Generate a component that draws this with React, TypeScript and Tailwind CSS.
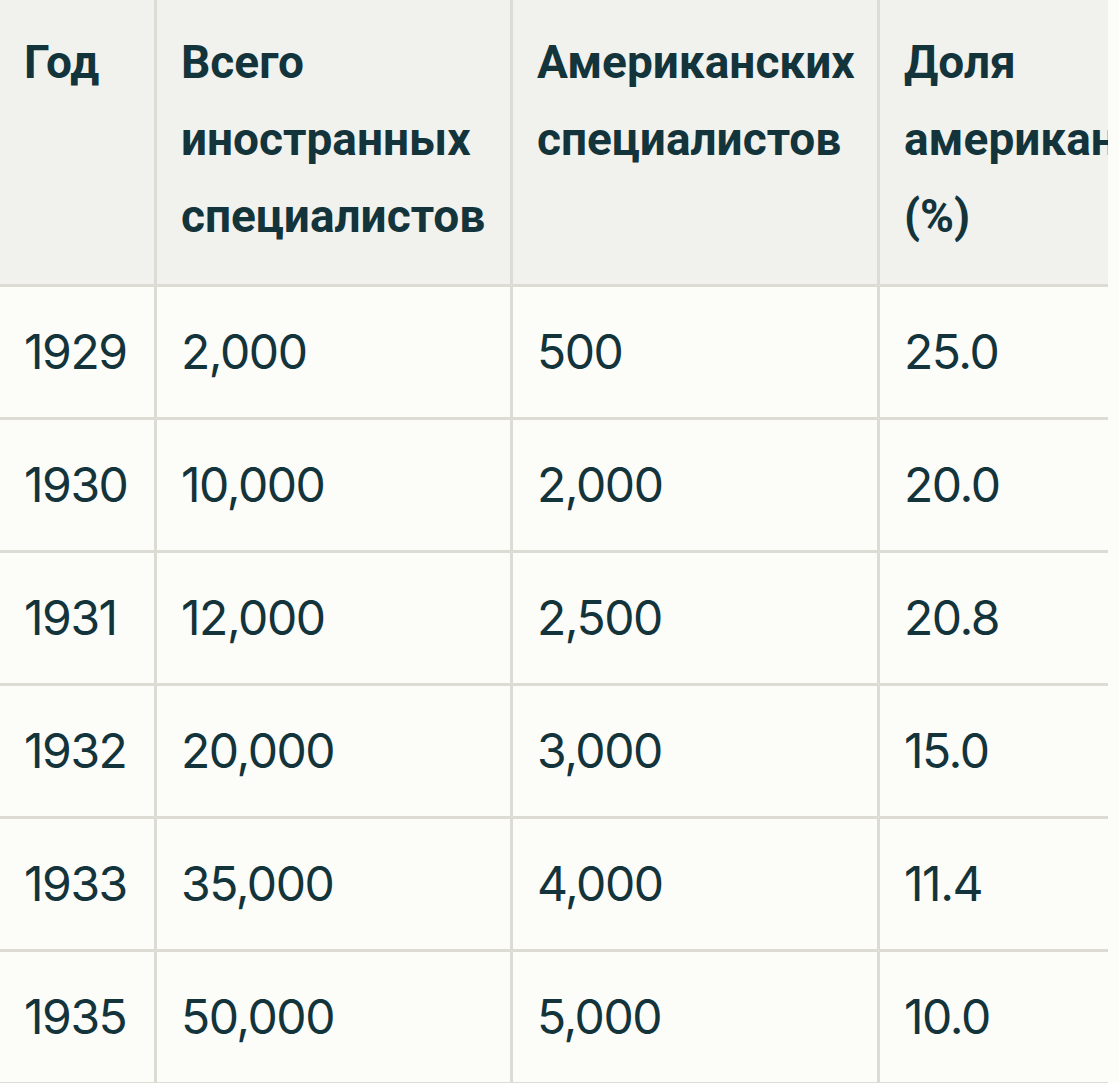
import { JSX } from 'react'

type Row = {
	year: string
	total: string
	american: string
	share: string
}

const rows: Row[] = [
	{ year: '1929', total: '2,000', american: '500', share: '25.0' },
	{ year: '1930', total: '10,000', american: '2,000', share: '20.0' },
	{ year: '1931', total: '12,000', american: '2,500', share: '20.8' },
	{ year: '1932', total: '20,000', american: '3,000', share: '15.0' },
	{ year: '1933', total: '35,000', american: '4,000', share: '11.4' },
	{ year: '1935', total: '50,000', american: '5,000', share: '10.0' },
]

export default function App(): JSX.Element {
	const th = 'h-[287px] align-top pt-[24px] px-6 text-left font-bold text-[46px] leading-[77px] border-b-[3px] border-[#dcdbd4] bg-[#f1f1ed]'
	const td = 'h-[133px] align-middle px-6 text-[48px] leading-[56px] tracking-[-0.03em] border-b-[3px] border-[#dcdbd4]'

	return (
		<div className="min-h-screen bg-[#fcfcf9] text-[#13343b]">
			<div className="w-[1108px] overflow-hidden">
				<table className="table-fixed border-separate border-spacing-0 w-[1290px]">
					<colgroup>
						<col className="w-[154px]" />
						<col className="w-[356px]" />
						<col className="w-[367px]" />
						<col className="w-[413px]" />
					</colgroup>
					<thead style={ { fontFamily: 'Roboto, "Noto Sans", sans-serif' } }>
						<tr>
							<th className={ th }>Год</th>
							<th className={ `${ th } border-l-[3px]` }>Всего иностранных специалистов</th>
							<th className={ `${ th } border-l-[3px]` }>Американских специалистов</th>
							<th className={ `${ th } border-l-[3px]` }>Доля американских (%)</th>
						</tr>
					</thead>
					<tbody style={ { fontFamily: 'Inter, "Noto Sans", sans-serif' } }>
						{ rows.map(r => (
							<tr key={ r.year }>
								<td className={ td }>{ r.year }</td>
								<td className={ `${ td } border-l-[3px]` }>{ r.total }</td>
								<td className={ `${ td } border-l-[3px]` }>{ r.american }</td>
								<td className={ `${ td } border-l-[3px]` }>{ r.share }</td>
							</tr>
						)) }
					</tbody>
				</table>
			</div>
		</div>
	)
}
